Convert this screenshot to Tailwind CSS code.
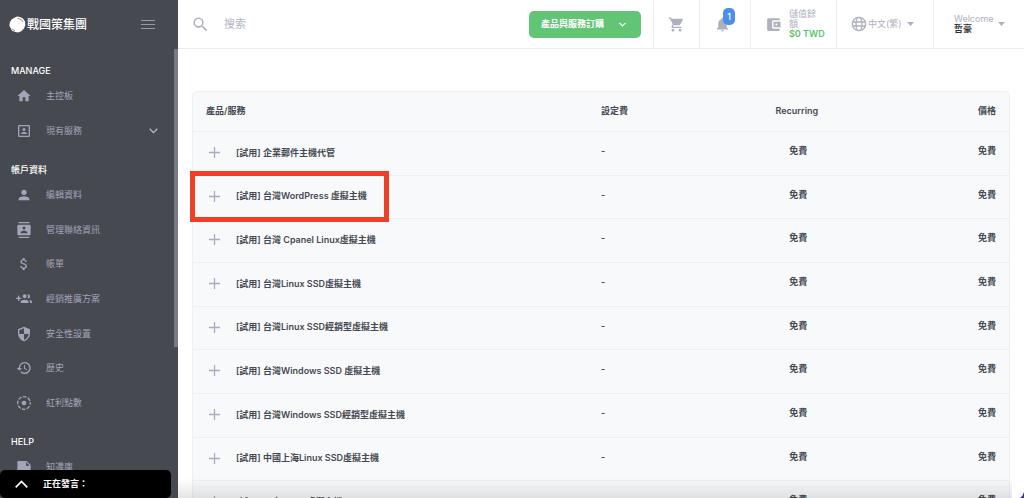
<!DOCTYPE html>
<html lang="zh-Hant">
<head>
<meta charset="utf-8">
<meta name="viewport" content="width=device-width, initial-scale=1">
<title>戰國策集團</title>
<script src="https://cdn.jsdelivr.net/npm/@tailwindcss/browser@4"></script>
</head>
<body class="relative flex h-screen overflow-hidden bg-white font-['Inter','Noto_Sans_CJK_TC',sans-serif] text-[9px] leading-3 text-[#464a52]">

<aside class="relative flex w-[178px] shrink-0 flex-col bg-[#464950] text-[#a2a4b8]">
  <div class="flex h-[49px] shrink-0 items-center justify-between pr-[23px] pl-[9px]">
    <a href="#" class="flex items-center gap-px text-[12px] leading-4 font-medium text-white">
      <svg class="size-[17px]" viewBox="0 0 17 17"><path d="M8 .6 11 .9 14 2.6 16 5.4 16.4 9 15 12.6 12.4 15.2 9 16.5 6.6 16 3 14.8 1.6 12 .4 9.4 1 6 2.8 3.2 5 2z" fill="#fff"/><path d="M8.500 2.400Q12.500 2.200 14 6M3 12.600Q4 14.300 6 14.700" fill="none" stroke="#464950" stroke-width=".6"/></svg>
      <span>戰國策集團</span>
    </a>
    <button type="button" aria-label="選單"><svg class="h-[10px] w-[14px]" viewBox="0 0 14 10" stroke="#989aa8" stroke-width="1"><path d="M0 .5h14M0 4.500h14M0 8.500h14"/></svg></button>
  </div>
  <nav class="flex min-h-0 flex-1 flex-col gap-[14px] overflow-hidden pt-[14px]">
    <section>
      <h2 class="h-[15px] pl-[11px] leading-[15px] font-medium text-white">MANAGE</h2>
      <ul class="[&>li]:h-[35px] [&_a]:flex [&_a]:h-full [&_a]:items-center [&_a]:gap-[14px] [&_a]:pl-4 [&_svg]:shrink-0">
        <li><a href="#"><svg class="size-4" viewBox="0 0 24 24" fill="currentColor"><path d="M10 20v-6h4v6h5v-8h3L12 3 2 12h3v8z"/></svg>主控板</a></li>
        <li><a href="#"><svg class="size-4" viewBox="0 0 24 24" fill="currentColor"><path d="M19 3H5a2 2 0 0 0-2 2v14c0 1.100.9 2 2 2h14c1.100 0 2-.9 2-2V5a2 2 0 0 0-2-2zm0 16H5V5h14v14zm-7-7a2.250 2.250 0 1 0 0-4.500 2.250 2.250 0 0 0 0 4.500zm4.500 3.750c0-1.500-3-2.320-4.500-2.320s-4.500.82-4.500 2.320v.75h9z"/></svg>現有服務<svg class="mr-5 ml-auto h-[6px] w-[9px]" viewBox="0 0 9 6" fill="none" stroke="#b5b7c4" stroke-width="1.300"><path d="M.7.8 4.500 4.600 8.300.8"/></svg></a></li>
      </ul>
    </section>
    <section>
      <h2 class="h-[15px] pl-[11px] leading-[15px] font-medium text-white">帳戶資料</h2>
      <ul class="[&>li]:h-[35px] [&>li:nth-child(3n)]:h-[34px] [&_a]:flex [&_a]:h-full [&_a]:items-center [&_a]:gap-[14px] [&_a]:pl-4 [&_svg]:size-4 [&_svg]:shrink-0">
        <li><a href="#"><svg viewBox="0 0 24 24" fill="currentColor"><path d="M12 12a4 4 0 1 0 0-8 4 4 0 0 0 0 8zm0 2c-2.670 0-8 1.340-8 4v2h16v-2c0-2.660-5.330-4-8-4z"/></svg>編輯資料</a></li>
        <li><a href="#"><svg viewBox="0 0 24 24" fill="currentColor"><path d="M20 0H4v2h16V0zM4 24h16v-2H4v2zM20 4H4a2 2 0 0 0-2 2v12c0 1.100.9 2 2 2h16c1.100 0 2-.9 2-2V6a2 2 0 0 0-2-2zm-8 2.750a2.250 2.250 0 1 1 0 4.500 2.250 2.250 0 0 1 0-4.500zM17 17H7v-1.500c0-1.670 3.330-2.500 5-2.500s5 .83 5 2.500V17z"/></svg>管理聯絡資訊</a></li>
        <li><a href="#"><svg viewBox="0 0 24 24" fill="currentColor"><path d="M11.800 10.900c-2.270-.59-3-1.200-3-2.150 0-1.090 1.010-1.850 2.700-1.850 1.780 0 2.440.85 2.500 2.100h2.210c-.07-1.720-1.120-3.300-3.210-3.810V3h-3v2.160c-1.940.42-3.500 1.680-3.500 3.610 0 2.310 1.910 3.460 4.700 4.130 2.500.6 3 1.480 3 2.410 0 .69-.49 1.790-2.700 1.790-2.060 0-2.870-.92-2.980-2.100h-2.200c.12 2.190 1.760 3.420 3.680 3.830V21h3v-2.150c1.950-.37 3.500-1.500 3.500-3.550 0-2.840-2.430-3.810-4.700-4.400z"/></svg>帳單</a></li>
        <li><a href="#"><svg viewBox="0 0 24 24" fill="currentColor"><path d="M8 10H5V7H3v3H0v2h3v3h2v-3h3v-2zm10 1a3 3 0 1 0-.91-5.860 5 5 0 0 1 0 5.720c.28.090.59.140.91.140zm-5 0a3 3 0 1 0 0-6 3 3 0 0 0 0 6zm6.620 2.160c.83.730 1.380 1.660 1.380 2.840v2h3v-2c0-1.540-2.370-2.490-4.380-2.840zM13 13c-2 0-6 1-6 3v2h12v-2c0-2-4-3-6-3z"/></svg>經銷推廣方案</a></li>
        <li><a href="#"><svg viewBox="0 0 24 24" fill="currentColor"><path d="M12 1 3 5v6c0 5.550 3.840 10.740 9 12 5.160-1.260 9-6.450 9-12V5l-9-4zm0 10.990h7c-.53 4.120-3.280 7.790-7 8.940V12H5V6.300l7-3.110v8.800z"/></svg>安全性設置</a></li>
        <li><a href="#"><svg viewBox="0 0 24 24" fill="currentColor"><path d="M13 3a9 9 0 0 0-9 9H1l3.890 3.890.07.14L9 12H6a7 7 0 1 1 2.060 4.940l-1.420 1.420A9 9 0 1 0 13 3zm-1 5v5l4.280 2.540.72-1.210-3.500-2.080V8H12z"/></svg>歷史</a></li>
        <li><a href="#"><svg viewBox="0 0 24 24"><circle cx="12" cy="12" r="9.500" fill="none" stroke="currentColor" stroke-width="2" stroke-dasharray="5.460 2" stroke-dashoffset="2.700"/><circle cx="12" cy="12" r="3.500" fill="currentColor"/></svg>紅利點數</a></li>
      </ul>
    </section>
    <section>
      <h2 class="h-[15px] pl-[11px] leading-[15px] font-medium text-white">HELP</h2>
      <ul><li class="h-[35px]"><a href="#" class="flex h-full items-center gap-[14px] pl-4"><svg class="size-4 shrink-0" viewBox="0 0 24 24" fill="currentColor"><path d="M4 3a2 2 0 0 0-2 2v14h20V9l-6-6zm11 1.500L20.500 10H15z"/></svg>知識庫</a></li></ul>
    </section>
  </nav>
  <div class="absolute top-[49px] right-0 h-[298px] w-1 bg-[#787a83]"></div>
</aside>

<main class="flex min-w-0 flex-1 flex-col">
  <header class="flex h-[49px] shrink-0 items-stretch border-b border-[#efeff1] text-[#aeb0c0]">
    <label class="flex min-w-0 flex-1 items-center gap-[14px] pl-[13px]">
      <svg class="size-[19px] shrink-0" viewBox="0 0 24 24" fill="currentColor"><path d="M15.500 14h-.79l-.28-.27A6.470 6.470 0 0 0 16 9.500 6.500 6.500 0 1 0 9.500 16c1.610 0 3.090-.59 4.230-1.570l.27.28v.79l5 4.990L20.490 19l-4.990-5zm-6 0a4.500 4.500 0 1 1 0-9 4.500 4.500 0 0 1 0 9z"/></svg>
      <input type="text" aria-label="搜索" placeholder="搜索" class="w-full min-w-0 text-[11px] leading-4 outline-none placeholder:text-[#b4b5c5]">
    </label>
    <div class="flex items-center pr-3">
      <button type="button" class="flex h-[27px] w-[112px] items-center justify-between rounded-[5px] bg-[#62c475] pr-[15px] pl-3 font-semibold text-white">產品與服務訂購
        <svg class="h-[5px] w-[7px]" viewBox="0 0 7 5" fill="none" stroke="#fff" stroke-width="1.200"><path d="M.5.8 3.500 3.800 6.500.8"/></svg>
      </button>
    </div>
    <button type="button" aria-label="購物車" class="flex w-[46px] items-center justify-center border-l border-[#efeff1]">
      <svg class="size-[17px]" viewBox="0 0 24 24" fill="currentColor"><path d="M7 18a2 2 0 1 0 0 4 2 2 0 0 0 0-4zM1 2v2h2l3.600 7.590-1.350 2.450C4.520 15.370 5.480 17 7 17h12v-2H7.420a.25.25 0 0 1-.22-.37L8.100 13h7.450c.75 0 1.410-.41 1.750-1.030l3.580-6.490A1 1 0 0 0 20.010 4H5.210l-.94-2H1zm16 16a2 2 0 1 0 0 4 2 2 0 0 0 0-4z"/></svg>
    </button>
    <button type="button" aria-label="通知" class="relative flex w-[51px] items-center border-l border-[#efeff1] pl-[14px]">
      <svg class="size-[17px]" viewBox="0 0 24 24" fill="currentColor"><path d="M12 22a2 2 0 0 0 2-2h-4a2 2 0 0 0 2 2zm6-6v-5c0-3.070-1.640-5.640-4.500-6.320V4a1.500 1.500 0 0 0-3 0v.68C7.630 5.360 6 7.920 6 11v5l-2 2v1h16v-1z"/></svg>
      <span class="absolute top-2 left-[23px] flex h-[17px] w-3 items-center justify-center rounded-[5px] bg-[#4b8fec] font-medium text-white">1</span>
    </button>
    <a href="#" class="flex w-[86px] items-center gap-[7px] border-l border-[#efeff1] pl-[14px]">
      <svg class="size-[17px] shrink-0" viewBox="0 0 24 24" fill="currentColor"><path d="M21 18v1a2 2 0 0 1-2 2H5a2 2 0 0 1-2-2V5c0-1.100.9-2 2-2h14a2 2 0 0 1 2 2v1h-9a2 2 0 0 0-2 2v8c0 1.100.9 2 2 2h9zm-9-2h10V8H12v8zm4-2.500a1.500 1.500 0 1 1 0-3 1.500 1.500 0 0 1 0 3z"/></svg>
      <span class="leading-[10px] whitespace-nowrap">儲值餘<br>額<br><strong class="font-semibold text-[#5cc46f]">$0 TWD</strong></span>
    </a>
    <button type="button" class="flex w-[97px] items-center border-l border-[#efeff1] pl-[14px] whitespace-nowrap">
      <svg class="mr-px size-4 shrink-0" viewBox="0 0 24 24" fill="none" stroke="currentColor" stroke-width="2"><circle cx="12" cy="12" r="10"/><ellipse cx="12" cy="12" rx="4.500" ry="10"/><path d="M2.500 9h19M2.500 15h19"/></svg>
      中文(繁)
      <svg class="ml-[5px] h-1 w-[7px] shrink-0" viewBox="0 0 7 4"><path d="M0 0h7L3.500 4z" fill="currentColor"/></svg>
    </button>
    <button type="button" class="flex w-[91px] items-center gap-1 border-l border-[#efeff1] pl-[20px] text-left">
      <span class="leading-[10px]">Welcome<br><strong class="font-semibold text-[#303238]">哲豪</strong></span>
      <svg class="h-1 w-[7px] shrink-0" viewBox="0 0 7 4"><path d="M0 0h7L3.500 4z" fill="currentColor"/></svg>
    </button>
  </header>

  <div class="min-h-0 flex-1 overflow-hidden px-[14px] pt-[42px]">
    <div class="rounded-t-[5px] border border-[#eeeff2] bg-[#f8f9fb]">
      <table class="w-full table-fixed border-collapse text-left font-semibold">
        <colgroup><col class="w-[50%]"><col class="w-[12%]"><col class="w-[24%]"><col></colgroup>
        <thead>
          <tr class="h-[39px] [&>th]:font-semibold">
            <th class="pl-[13px]">產品/服務</th><th>設定費</th><th class="text-center">Recurring</th><th class="pr-[13px] text-right">價格</th>
          </tr>
        </thead>
        <tbody class="[&>tr]:h-[44px] [&>tr]:border-t [&>tr]:border-[#eeeff2] [&>tr:nth-child(3n+2)]:h-[43px] [&>tr>td]:pb-1 [&>tr>td:first-child]:pb-px [&>tr>td:nth-child(3)]:pl-[3px] [&>tr>td:nth-child(3)]:text-center [&>tr>td:nth-child(4)]:pr-[13px] [&>tr>td:nth-child(4)]:text-right [&_button]:flex [&_button]:items-center [&_button]:gap-4 [&_button]:pl-4 [&_button]:whitespace-nowrap [&_svg]:size-[11px] [&_svg]:fill-none [&_svg]:stroke-[#a7abc3] [&_svg]:stroke-[1.3px]">
          <tr><td><button type="button"><svg viewBox="0 0 11 11"><path d="M5.500 0v11M0 5.500h11"/></svg>[試用] 企業郵件主機代管</button></td><td>-</td><td>免費</td><td>免費</td></tr>
          <tr><td class="relative"><button type="button"><svg viewBox="0 0 11 11"><path d="M5.500 0v11M0 5.500h11"/></svg>[試用] 台灣WordPress 虛擬主機</button><span class="pointer-events-none absolute -top-[5px] -left-[3px] h-[51px] w-[199px] border-[5px] border-[#ee4026]"></span></td><td>-</td><td>免費</td><td>免費</td></tr>
          <tr><td><button type="button"><svg viewBox="0 0 11 11"><path d="M5.500 0v11M0 5.500h11"/></svg>[試用] 台灣 Cpanel Linux虛擬主機</button></td><td>-</td><td>免費</td><td>免費</td></tr>
          <tr><td><button type="button"><svg viewBox="0 0 11 11"><path d="M5.500 0v11M0 5.500h11"/></svg>[試用] 台灣Linux SSD虛擬主機</button></td><td>-</td><td>免費</td><td>免費</td></tr>
          <tr><td><button type="button"><svg viewBox="0 0 11 11"><path d="M5.500 0v11M0 5.500h11"/></svg>[試用] 台灣Linux SSD經銷型虛擬主機</button></td><td>-</td><td>免費</td><td>免費</td></tr>
          <tr><td><button type="button"><svg viewBox="0 0 11 11"><path d="M5.500 0v11M0 5.500h11"/></svg>[試用] 台灣Windows SSD 虛擬主機</button></td><td>-</td><td>免費</td><td>免費</td></tr>
          <tr><td><button type="button"><svg viewBox="0 0 11 11"><path d="M5.500 0v11M0 5.500h11"/></svg>[試用] 台灣Windows SSD經銷型虛擬主機</button></td><td>-</td><td>免費</td><td>免費</td></tr>
          <tr><td><button type="button"><svg viewBox="0 0 11 11"><path d="M5.500 0v11M0 5.500h11"/></svg>[試用] 中國上海Linux SSD虛擬主機</button></td><td>-</td><td>免費</td><td>免費</td></tr>
          <tr><td><button type="button"><svg viewBox="0 0 11 11"><path d="M5.500 0v11M0 5.500h11"/></svg>[試用] 日本Linux 虛擬主機</button></td><td>-</td><td>免費</td><td>免費</td></tr>
        </tbody>
      </table>
    </div>
  </div>
</main>

<div class="pointer-events-none absolute right-3 bottom-0 left-[178px] h-5 bg-linear-to-b from-transparent to-black/10"></div>
<svg class="pointer-events-none absolute right-0 bottom-0 h-[6px] w-[4px]" viewBox="0 0 4 6"><path d="M4 0v6H0Q3 4 4 0z" fill="#4a22a8"/></svg>
<div class="absolute bottom-0 left-0 flex h-7 w-[171px] items-center gap-[15px] rounded-[5px] bg-black pl-[15px] font-semibold text-white">
  <svg class="h-2 w-[13px]" viewBox="0 0 13 8" fill="none" stroke="#fff" stroke-width="1.700"><path d="M.7 7.300 6.500 1.400 12.300 7.300"/></svg>
  正在發言：
</div>
</body>
</html>
